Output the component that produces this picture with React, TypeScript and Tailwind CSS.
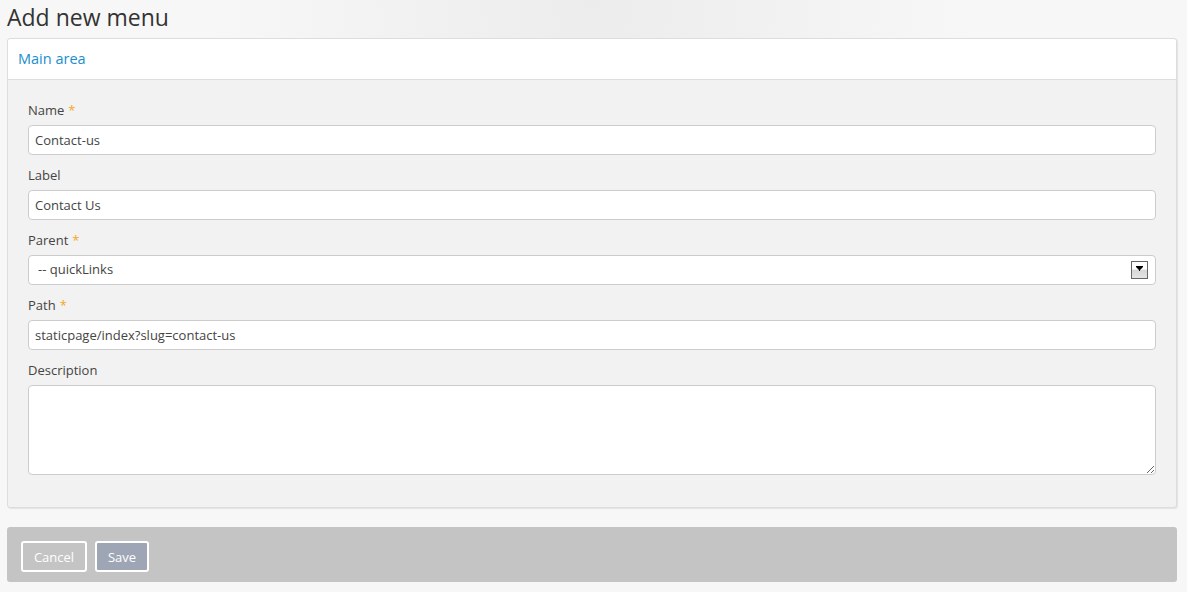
import React from 'react';

function Field({ label, required, children }: { label: string; required?: boolean; children: React.ReactNode }) {
  return (
    <div className="mb-[11px]">
      <label className="block text-[13px] leading-[18px] text-[#444] mb-[6px]">
        {label}
        {required && <span className="ml-[4px] text-[#f5a623]">*</span>}
      </label>
      {children}
    </div>
  );
}

const inputCls =
  'block w-full h-[30px] rounded-[4px] border border-[#cccccc] bg-white px-[6px] text-[13px] text-[#444] outline-none';

export default function App() {
  return (
    <div
      className="min-h-[592px] w-full bg-[#f7f7f7] bg-[radial-gradient(ellipse_at_top,#ececec_0%,#f7f7f7_45%)] pl-[7px] pr-[10px] pb-[10px]"
      style={{ fontFamily: '"Open Sans", "Noto Sans", Arial, sans-serif' }}
    >
      <h1 className="h-[38px] text-[23px] leading-[34px] font-normal text-[#333]">Add new menu</h1>

      {/* Main form panel */}
      <div className="rounded-[3px] border border-[#dddddd] bg-[#f2f2f2] shadow-[1px_1px_1px_rgba(0,0,0,0.08)]">
        <div className="h-[41px] rounded-t-[3px] border-b border-[#dddddd] bg-white px-[10px] flex items-center">
          <span className="text-[14.5px] text-[#1a8dcf]">Main area</span>
        </div>
        <div className="px-[20px] pt-[21px] pb-[21px]">
          <Field label="Name" required>
            <input className={inputCls} defaultValue="Contact-us" />
          </Field>
          <Field label="Label">
            <input className={inputCls} defaultValue="Contact Us" />
          </Field>
          <Field label="Parent" required>
            <div className="flex h-[30px] w-full items-center justify-between rounded-[4px] border border-[#cccccc] bg-white pl-[9px] pr-[7px] text-[13px] text-[#444]">
              <span>-- quickLinks</span>
              <div className="flex h-[18px] w-[17px] items-start justify-center border border-[#666] bg-[linear-gradient(#ffffff_0%,#ffffff_45%,#d6d6d6_50%,#e4e4e4_100%)] pt-[4px]">
                <svg width="7" height="5" viewBox="0 0 7 5">
                  <path d="M0 0h7v1L4 4v1H3V4L0 1z" fill="#000" />
                </svg>
              </div>
            </div>
          </Field>
          <Field label="Path" required>
            <input className={inputCls} defaultValue="staticpage/index?slug=contact-us" />
          </Field>
          <Field label="Description">
            <textarea className="block h-[90px] w-full rounded-[4px] border border-[#cccccc] bg-white px-[6px] py-[4px] text-[13px] text-[#444] outline-none" />
          </Field>
        </div>
      </div>

      {/* Action bar */}
      <div className="mt-[19px] flex h-[55px] items-start gap-[8px] rounded-[3px] bg-[#c4c4c4] px-[14px] pt-[14px]">
        <button className="h-[31px] w-[66px] rounded-[3px] border-2 border-white bg-transparent pt-[2px] text-[13px] text-white">
          Cancel
        </button>
        <button className="h-[31px] w-[54px] rounded-[3px] border-2 border-white bg-[#9ea6b5] pt-[2px] text-[13px] text-white">
          Save
        </button>
      </div>
    </div>
  );
}
